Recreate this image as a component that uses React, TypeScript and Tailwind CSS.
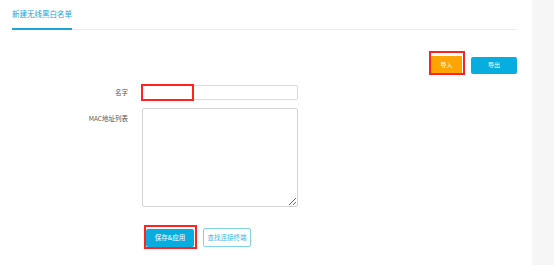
export default function App() {
  return (
    <div className="flex w-[554px] h-[265px] bg-white overflow-hidden" style={{ fontFamily: '"Noto Sans CJK SC", "Liberation Sans", sans-serif' }}>
      <div className="w-[532px]">
        {/* tab header */}
        <div className="ml-[12px] w-[505px] h-[30px] border-b border-[#ececec] flex items-end">
          <div className="w-[60px] h-[30px] pt-[9px] text-[7.5px] leading-[10px] whitespace-nowrap text-[#1aa5dc] border-b-2 border-[#1aa5dc] -mb-px">
            新建无线黑白名单
          </div>
        </div>

        {/* import / export */}
        <div className="flex justify-end items-center gap-[9px] pr-[15px] mt-[26px] h-[18px]">
          <div className="relative flex">
            <button className="flex items-center justify-center w-[31px] h-[18px] bg-[#ffa400] text-white text-[6px] leading-none rounded-[1px]">导入</button>
            <div className="absolute -left-[2px] -top-[5px] w-[36px] h-[24px] border-2 border-[#f22]"></div>
          </div>
          <button className="flex items-center justify-center w-[46px] h-[17px] bg-[#08ade0] text-white text-[6px] leading-none rounded-[2px]">导出</button>
        </div>

        {/* form */}
        <div className="mt-[11px] flex items-center h-[15px]">
          <div className="w-[128px] text-right text-[6.5px] leading-none text-[#555]">名字</div>
          <div className="relative flex ml-[13px]">
            <input className="block w-[157px] h-[15px] border border-[#dcdcdc] rounded-[2px] outline-none" />
            <div className="absolute left-0 -top-px w-[53px] h-[17px] border-2 border-[#f22]"></div>
          </div>
        </div>
        <div className="mt-[8px] flex items-start">
          <div className="w-[128px] text-right text-[6.5px] leading-none text-[#555] pt-[7px]">MAC地址列表</div>
          <textarea className="block ml-[14px] w-[156px] h-[99px] border border-[#d4d4d4] rounded-[2px] outline-none resize" />
        </div>

        {/* actions */}
        <div className="mt-[21px] ml-[146px] flex items-center gap-[9px] h-[19px]">
          <div className="relative flex">
            <button className="flex items-center justify-center w-[48px] h-[18px] bg-[#08ade0] text-white text-[6.5px] leading-none rounded-[2px]">保存&amp;应用</button>
            <div className="absolute -left-[2px] -top-[4px] w-[53px] h-[24px] border-2 border-[#f22]"></div>
          </div>
          <button className="flex items-center justify-center w-[48px] h-[19px] border border-[#7fd3ee] text-[#3bb8e4] text-[6.5px] leading-none rounded-[2px] bg-white">查找连接终端</button>
        </div>
      </div>
      <div className="w-[22px] bg-[#f6f6f6]"></div>
    </div>
  );
}
